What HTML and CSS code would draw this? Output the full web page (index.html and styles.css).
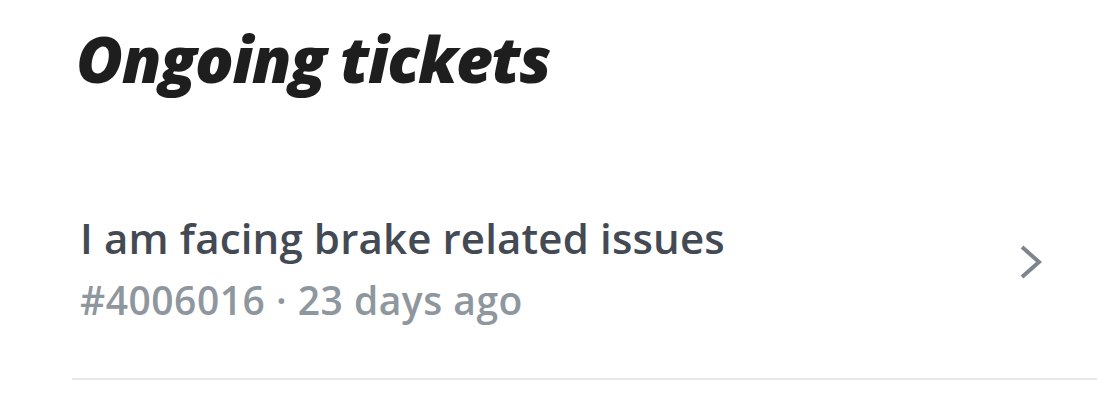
FILE: index.html
```html
<!DOCTYPE html>
<html>
<head>
<meta charset="utf-8">
<link rel="stylesheet" href="styles.css">
</head>
<body>
<div class="page">
  <h1 class="title">Ongoing tickets</h1>
  <div class="ticket">
    <div class="ticket-text">
      <div class="ticket-name">I am facing brake related issues</div>
      <div class="ticket-meta">#4006016 · 23 days ago</div>
    </div>
    <svg class="chevron" width="30" height="40" viewBox="0 0 30 40">
      <path d="M6 5 L23 20 L6 35" fill="none" stroke="#7d868f" stroke-width="4" stroke-linecap="butt" stroke-linejoin="miter"/>
    </svg>
  </div>
</div>
</body>
</html>
```
FILE: styles.css
```css
html, body {
  margin: 0;
  padding: 0;
  background: #ffffff;
}
body {
  font-family: "Open Sans", "Liberation Sans", sans-serif;
}
.page {
  padding: 19px 12px 0 72px;
}
.title {
  margin: 0 0 0 4px;
  font-family: "Open Sans", sans-serif;
  font-weight: 800;
  font-style: italic;
  font-size: 64px;
  line-height: 80px;
  color: #1e1e1e;
  letter-spacing: -1.5px;
}
.ticket {
  margin-top: 111px;
  display: flex;
  align-items: center;
  justify-content: space-between;
  border-bottom: 2px solid #e8e8e8;
  padding: 0 51px 52px 8px;
}
.ticket-name {
  font-size: 42px;
  font-weight: 600;
  color: #434a54;
  line-height: 56px;
  letter-spacing: 0.15px;
}
.ticket-meta {
  margin-top: 8px;
  font-size: 39px;
  font-weight: 600;
  color: #8e969e;
  line-height: 52px;
  letter-spacing: 0.5px;
}
.chevron {
  display: block;
  margin-bottom: 12px;
}
```
